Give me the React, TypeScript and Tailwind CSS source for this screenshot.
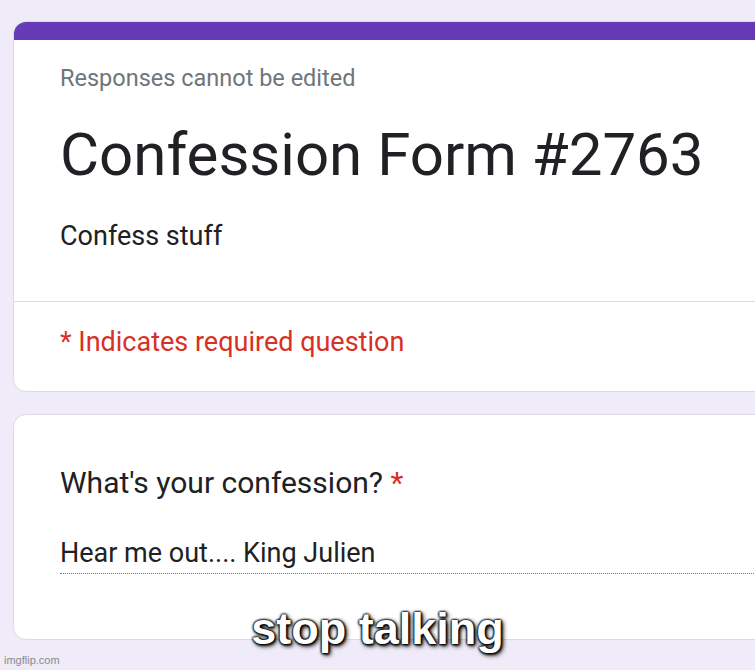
import React from "react";

export default function App() {
  const roboto = { fontFamily: "Roboto, 'Liberation Sans', sans-serif" };
  return (
    <div className="relative w-[755px] h-[670px] overflow-hidden bg-[#efebf8]" style={roboto}>
      <div className="pt-[21px] pl-[13px] flex flex-col gap-[22px]">
        <div className="w-[800px] rounded-[13px] overflow-hidden bg-white border border-[#dadce0]">
          <div className="h-[19px] bg-[#673ab7] -mx-px -mt-px"></div>
          <div className="pl-[46px] pt-[22px]">
            <div className="text-[23.5px] leading-[32px] text-[#70757a]">Responses cannot be edited</div>
            <div className="mt-[25px] text-[60px] leading-[72px] text-[#202124]">Confession Form #2763</div>
            <div className="mt-[27px] text-[27px] leading-[36px] text-[#202124]">Confess stuff</div>
          </div>
          <div className="mt-[47px] border-t border-[#dadce0]"></div>
          <div className="pl-[46px] pt-[22px] pb-[31px] text-[27px] leading-[36px] text-[#d93025]">
            * Indicates required question
          </div>
        </div>
        <div className="w-[800px] h-[226px] rounded-[13px] bg-white border border-[#dadce0] pl-[46px] pt-[48px]">
          <div className="text-[30px] leading-[40px] text-[#202124]">
            What's your confession? <span className="text-[#d93025]">*</span>
          </div>
          <div className="mt-[32px] text-[27px] leading-[36px] text-[#202124] border-b border-dotted border-[#70757a] pb-[2px]">
            Hear me out.... King Julien
          </div>
        </div>
      </div>
      <div
        className="absolute left-0 right-0 top-[601px] text-center text-white font-bold text-[45px] leading-[56px]"
        style={{
          fontFamily: "'Liberation Sans', Arial, sans-serif",
          textShadow:
            "0 0 2px #000, 0 0 2px #000, 0 0 3px #000, 1px 1px 3px #000, 2px 2px 5px #000",
        }}
      >
        stop talking
      </div>
      <div
        className="absolute left-[4px] bottom-[3px] text-[11px] leading-[14px] text-[#8a8a8a]"
        style={{ fontFamily: "'Liberation Sans', Arial, sans-serif" }}
      >
        imgflip.com
      </div>
    </div>
  );
}
